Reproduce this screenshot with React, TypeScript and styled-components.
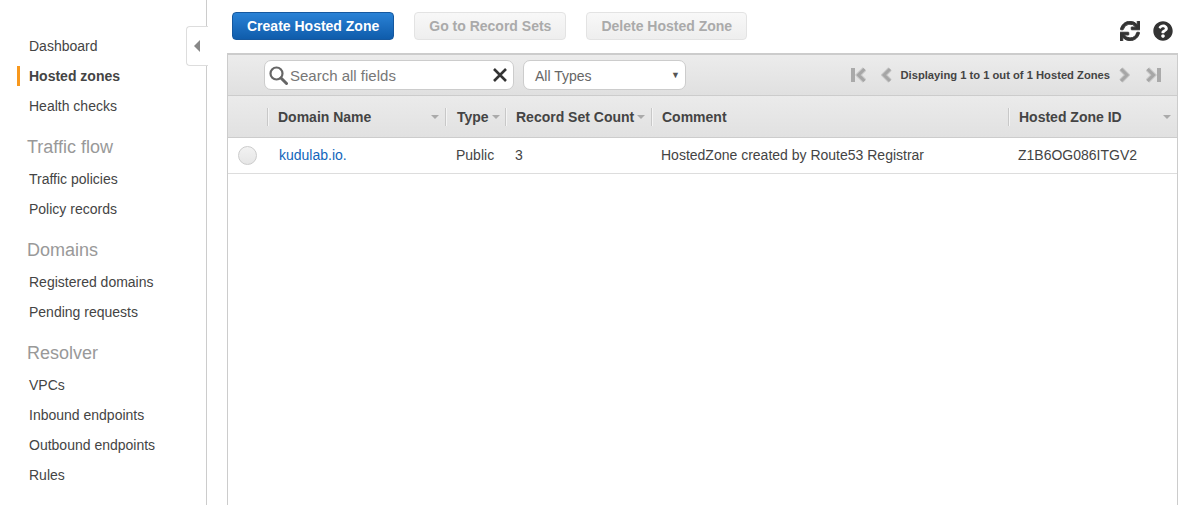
import React from 'react';
import styled, { createGlobalStyle } from 'styled-components';
import { FaSync, FaQuestionCircle } from 'react-icons/fa';

const GlobalStyle = createGlobalStyle`
   html, body {
      margin: 0;
      height: 100%;
      overflow: hidden;
      background: #fff;
   }
   body {
      font-family: "Liberation Sans", Arial, sans-serif;
      font-size: 14px;
      color: #444;
   }
   #root {
      height: 100%;
   }
`;

const COLUMNS = '39px 178px 60px 146px 357px 169px';

const Page = styled.div`
   display: flex;
   height: 505px;
   width: 1190px;
   position: relative;
`;

const Sidebar = styled.nav`
   width: 206px;
   flex: none;
   box-sizing: content-box;
   border-right: 1px solid #ccc;
   padding-top: 31px;
`;

const NavItem = styled.a<{ $active?: boolean }>`
   display: block;
   height: 30px;
   line-height: 30px;
   padding-left: 29px;
   color: #444;
   font-weight: ${p => (p.$active ? 700 : 400)};
   position: relative;
   &::before {
      content: '';
      display: ${p => (p.$active ? 'block' : 'none')};
      position: absolute;
      left: 17px;
      top: 5px;
      width: 3px;
      height: 20px;
      background: #f8981d;
   }
`;

const NavHeading = styled.div`
   height: 34px;
   line-height: 34px;
   padding: 9px 0 0 27px;
   font-size: 18px;
   color: #999;
`;

const CollapseTab = styled.div`
   position: absolute;
   left: 186px;
   top: 26px;
   width: 21px;
   height: 38px;
   background: #fff;
   border: 1px solid #ddd;
   border-right: none;
   border-radius: 4px 0 0 4px;
   display: flex;
   align-items: center;
   justify-content: center;
   &::after {
      content: '';
      border-style: solid;
      border-width: 6px 6px 6px 0;
      border-color: transparent #888 transparent transparent;
      margin-right: 2px;
   }
`;

const Main = styled.main`
   flex: none;
   width: 951px;
   margin-left: 20px;
   display: flex;
   flex-direction: column;
`;

const Toolbar = styled.div`
   height: 53px;
   flex: none;
   display: flex;
   align-items: flex-start;
   gap: 20px;
   padding: 12px 0 0 5px;
   box-sizing: border-box;
   position: relative;
`;

const ActionButton = styled.button<{ $primary?: boolean }>`
   height: 28px;
   padding: 0 14px;
   box-sizing: border-box;
   font: 700 14px "Liberation Sans", Arial, sans-serif;
   border-radius: 4px;
   color: ${p => (p.$primary ? '#fff' : '#aaa')};
   border: 1px solid ${p => (p.$primary ? '#15589f' : '#e3e3e3')};
   background: ${p => (p.$primary ? 'linear-gradient(#2a82d6, #0f5cab)' : 'linear-gradient(#f8f8f8, #eeeeee)')};
`;

const ToolIcons = styled.div`
   position: absolute;
   right: 5px;
   top: 21px;
   display: flex;
   gap: 13px;
   color: #333;
   font-size: 20px;
   line-height: 0;
`;

const RefreshIcon = styled(FaSync)`
   stroke: currentColor;
   stroke-width: 24px;
`;

const Panel = styled.section`
   flex: 1;
   border: 1px solid #ccc;
   border-top: 2px solid #ccc;
   border-bottom: none;
   min-height: 0;
`;

const FilterBar = styled.div`
   height: 41px;
   box-sizing: border-box;
   border-bottom: 1px solid #ccc;
   background: linear-gradient(#ececec, #e0e0e0);
   display: flex;
   align-items: center;
   padding-left: 36px;
`;

const SearchBox = styled.div`
   width: 250px;
   height: 30px;
   box-sizing: border-box;
   background: #fff;
   border: 1px solid #ccc;
   border-radius: 7px;
   display: flex;
   align-items: center;
   padding: 0 5px 0 4px;
   font-size: 15px;
   color: #777;
   gap: 2px;
`;

const SearchText = styled.span`
   flex: 1;
`;

const TypeSelect = styled.div`
   width: 163px;
   height: 30px;
   margin-left: 9px;
   box-sizing: border-box;
   background: #fff;
   border: 1px solid #ccc;
   border-radius: 7px;
   display: flex;
   align-items: center;
   justify-content: space-between;
   padding: 2px 5px 0 11px;
   color: #666;
`;

const Caret = styled.span`
   font-size: 9px;
   margin-top: -3px;
   color: #555;
`;

const Pager = styled.div`
   margin-left: auto;
   margin-right: 16px;
   display: flex;
   align-items: center;
   color: #444;
   font-size: 11.2px;
   font-weight: 700;
   line-height: 0;
`;

const PagerLabel = styled.span`
   margin: 0 9px;
   line-height: 14px;
   white-space: nowrap;
`;

const PagerIcon = styled.svg<{ $gap?: number }>`
   height: 16px;
   margin-right: ${p => p.$gap ?? 0}px;
   fill: none;
`;

const HeaderRow = styled.div`
   display: grid;
   grid-template-columns: ${COLUMNS};
   height: 42px;
   box-sizing: border-box;
   border-bottom: 1px solid #ccc;
   background: linear-gradient(#ebebeb, #e1e1e1);
   align-items: center;
`;

const HeaderCell = styled.div<{ $compact?: boolean; $inset?: number }>`
   height: 18px;
   line-height: 18px;
   padding-left: ${p => p.$inset ?? 10}px;
   border-left: 1px solid #c8c8c8;
   box-shadow: 1px 0 0 #f4f4f4 inset;
   display: flex;
   align-items: center;
   justify-content: ${p => (p.$compact ? 'flex-start' : 'space-between')};
   gap: ${p => (p.$compact ? 3 : 0)}px;
   font-weight: 700;
   color: #444;
   white-space: nowrap;
`;

const EmptyCell = styled.div``;

const SortArrow = styled.span<{ $compact?: boolean }>`
   border-style: solid;
   border-width: 4px 4px 0 4px;
   border-color: #aaa transparent transparent transparent;
   margin-right: ${p => (p.$compact ? 0 : 6)}px;
   flex: none;
`;

const DataRow = styled.div`
   display: grid;
   grid-template-columns: ${COLUMNS};
   height: 36px;
   box-sizing: border-box;
   border-bottom: 1px solid #ddd;
   align-items: center;
`;

const DataCell = styled.div<{ $inset?: number }>`
   padding: 0 0 1px ${p => p.$inset ?? 10}px;
   color: #444;
   white-space: nowrap;
`;

const RadioCell = styled.div`
   padding-left: 10px;
   line-height: 0;
`;

const Radio = styled.span`
   display: inline-block;
   width: 17px;
   height: 17px;
   border: 1px solid #ccc;
   border-radius: 50%;
   background: linear-gradient(#f2f2f2, #e6e6e6);
`;

const DomainLink = styled.a`
   color: #1166bb;
`;

const SearchIcon = () => (
   <svg width="19" height="19" viewBox="0 0 19 19" fill="none" stroke="#666">
      <circle cx="7.5" cy="7.5" r="6" strokeWidth="2.2" />
      <path d="M12 12l5.5 5.5" strokeWidth="3" strokeLinecap="round" />
   </svg>
);

const ClearIcon = () => (
   <svg width="16" height="14" viewBox="0 0 16 14" fill="none" stroke="#333" strokeWidth="2.6">
      <path d="M2 1l12 12M14 1L2 13" />
   </svg>
);

// two tone chevron, same as the sprite in the console pager
const Chevron = ({ d }: { d: string }) => (
   <>
      <path d={d} stroke="#c8c8c8" strokeWidth="5" />
      <path d={d} stroke="#a6a6a6" strokeWidth="3" />
   </>
);

const First = () => (
   <PagerIcon viewBox="0 0 15 16" width="15" $gap={15}>
      <rect x="0" y="1" width="4" height="14" fill="#aaa" />
      <Chevron d="M13.500 2L7.500 8l6 6" />
   </PagerIcon>
);

const Prev = () => (
   <PagerIcon viewBox="0 0 11 16" width="11">
      <Chevron d="M9 2L3 8l6 6" />
   </PagerIcon>
);

const Next = () => (
   <PagerIcon viewBox="0 0 11 16" width="11" $gap={16}>
      <Chevron d="M2 2l6 6-6 6" />
   </PagerIcon>
);

const Last = () => (
   <PagerIcon viewBox="0 0 15 16" width="15">
      <Chevron d="M1.500 2l6 6-6 6" />
      <rect x="11" y="1" width="4" height="14" fill="#aaa" />
   </PagerIcon>
);

const navGroups = [
   { items: ['Dashboard', 'Hosted zones', 'Health checks'] },
   { title: 'Traffic flow', items: ['Traffic policies', 'Policy records'] },
   { title: 'Domains', items: ['Registered domains', 'Pending requests'] },
   { title: 'Resolver', items: ['VPCs', 'Inbound endpoints', 'Outbound endpoints', 'Rules'] }
];

export default function App() {
   return (
      <Page>
         <GlobalStyle />
         <Sidebar>
            {navGroups.map((group, i) => (
               <div key={i}>
                  {group.title && <NavHeading>{group.title}</NavHeading>}
                  {group.items.map(item => (
                     <NavItem key={item} $active={item === 'Hosted zones'}>
                        {item}
                     </NavItem>
                  ))}
               </div>
            ))}
         </Sidebar>
         <CollapseTab />

         <Main>
            <Toolbar>
               <ActionButton $primary>Create Hosted Zone</ActionButton>
               <ActionButton>Go to Record Sets</ActionButton>
               <ActionButton>Delete Hosted Zone</ActionButton>
               <ToolIcons>
                  <RefreshIcon />
                  <FaQuestionCircle />
               </ToolIcons>
            </Toolbar>

            <Panel>
               <FilterBar>
                  <SearchBox>
                     <SearchIcon />
                     <SearchText>Search all fields</SearchText>
                     <ClearIcon />
                  </SearchBox>
                  <TypeSelect>
                     All Types
                     <Caret>▼</Caret>
                  </TypeSelect>
                  <Pager>
                     <First />
                     <Prev />
                     <PagerLabel>Displaying 1 to 1 out of 1 Hosted Zones</PagerLabel>
                     <Next />
                     <Last />
                  </Pager>
               </FilterBar>

               <HeaderRow>
                  <EmptyCell />
                  <HeaderCell>
                     Domain Name
                     <SortArrow />
                  </HeaderCell>
                  <HeaderCell $compact $inset={11}>
                     Type
                     <SortArrow $compact />
                  </HeaderCell>
                  <HeaderCell $compact>
                     Record Set Count
                     <SortArrow $compact />
                  </HeaderCell>
                  <HeaderCell>Comment</HeaderCell>
                  <HeaderCell>
                     Hosted Zone ID
                     <SortArrow />
                  </HeaderCell>
               </HeaderRow>

               <DataRow>
                  <RadioCell>
                     <Radio />
                  </RadioCell>
                  <DataCell $inset={12}>
                     <DomainLink>kudulab.io.</DomainLink>
                  </DataCell>
                  <DataCell $inset={11}>Public</DataCell>
                  <DataCell>3</DataCell>
                  <DataCell>HostedZone created by Route53 Registrar</DataCell>
                  <DataCell>Z1B6OG086ITGV2</DataCell>
               </DataRow>
            </Panel>
         </Main>
      </Page>
   );
}
